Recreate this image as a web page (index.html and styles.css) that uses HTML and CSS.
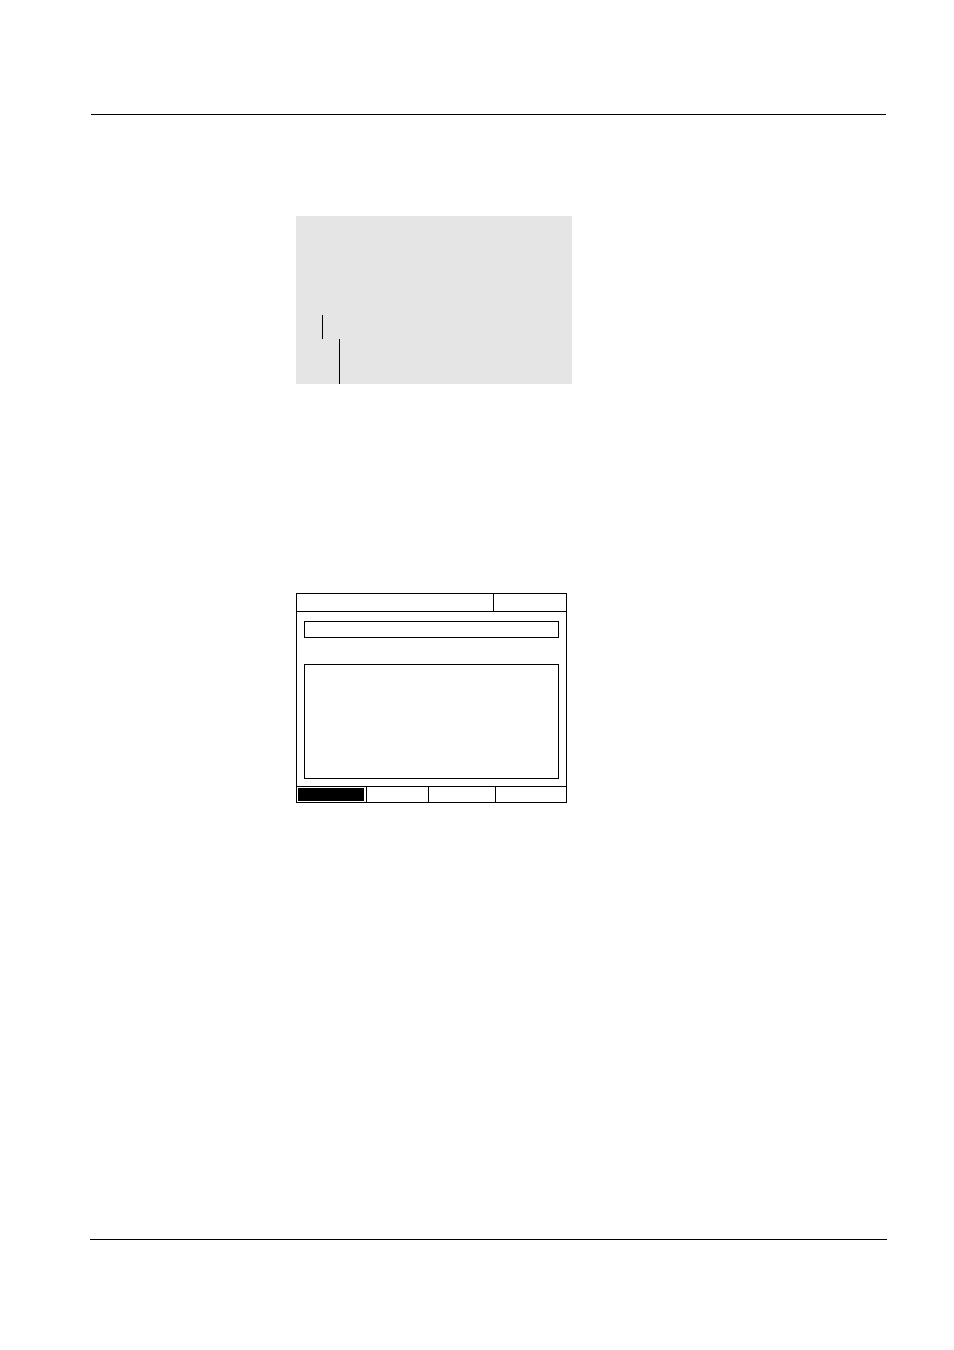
FILE: index.html
```html
<!DOCTYPE html>
<html lang="en">
<head>
  <meta charset="utf-8">
  <meta name="viewport" content="width=device-width, initial-scale=1">
  <link rel="stylesheet" href="styles.css">
</head>
<body class="page">
  <header class="page-header"></header>
  <main class="content">
    <section class="tree">
      <div class="branch branch-outer"></div>
      <div class="branch branch-inner"></div>
    </section>
    <section class="display">
      <div class="display-header">
        <div class="display-title"></div>
        <div class="display-status"></div>
      </div>
      <div class="display-body">
        <div class="field"></div>
        <div class="list"></div>
      </div>
      <div class="softkeys">
        <div class="softkey"><div class="softkey-fill"></div></div>
        <div class="softkey"></div>
        <div class="softkey"></div>
        <div class="softkey"></div>
      </div>
    </section>
  </main>
  <footer class="page-footer"></footer>
</body>
</html>
```

FILE: styles.css
```css
* {
  box-sizing: border-box;
}

.page {
  display: flex;
  flex-direction: column;
  min-height: 100vh;
  margin: 0;
  padding: 0 67px 0 90px;
  background: #fff;
  font-family: "Liberation Sans", sans-serif;
}

.page-header {
  margin: 0 1px;
  padding-top: 114px;
  border-bottom: 1px solid #000;
}

.content {
  display: flex;
  flex: 1;
  flex-direction: column;
  align-items: flex-start;
  gap: 209px;
  padding: 101px 0 0 206px;
}

.page-footer {
  padding-bottom: 110px;
  border-top: 1px solid #000;
}

/* Tree panel */
.tree {
  width: 100%;
  max-width: 276px;
  padding-top: 99px;
  background: #e5e5e5;
}

.branch {
  border-left: 1px solid #000;
}

.branch-outer {
  height: 24px;
  margin-left: 26px;
}

.branch-inner {
  height: 45px;
  margin-left: 43px;
}

/* Device display */
.display {
  width: 100%;
  max-width: 271px;
  border: 1px solid #000;
}

.display-header {
  display: grid;
  grid-template-columns: 1fr 73px;
  height: 18px;
  border-bottom: 1px solid #000;
}

.display-status {
  border-left: 1px solid #000;
}

.display-body {
  display: flex;
  flex-direction: column;
  gap: 26px;
  padding: 9px 7px 7px;
}

.field,
.list {
  border: 1px solid #000;
}

.field {
  height: 17px;
}

.list {
  height: 115px;
}

.softkeys {
  display: grid;
  grid-template-columns: 70fr 62fr 67fr 70fr;
  height: 16px;
  border-top: 1px solid #000;
}

.softkey {
  padding: 1px 2px 1px 1px;
}

.softkey:not(:last-child) {
  border-right: 1px solid #000;
}

.softkey-fill {
  height: 100%;
  background: #000;
}
```
